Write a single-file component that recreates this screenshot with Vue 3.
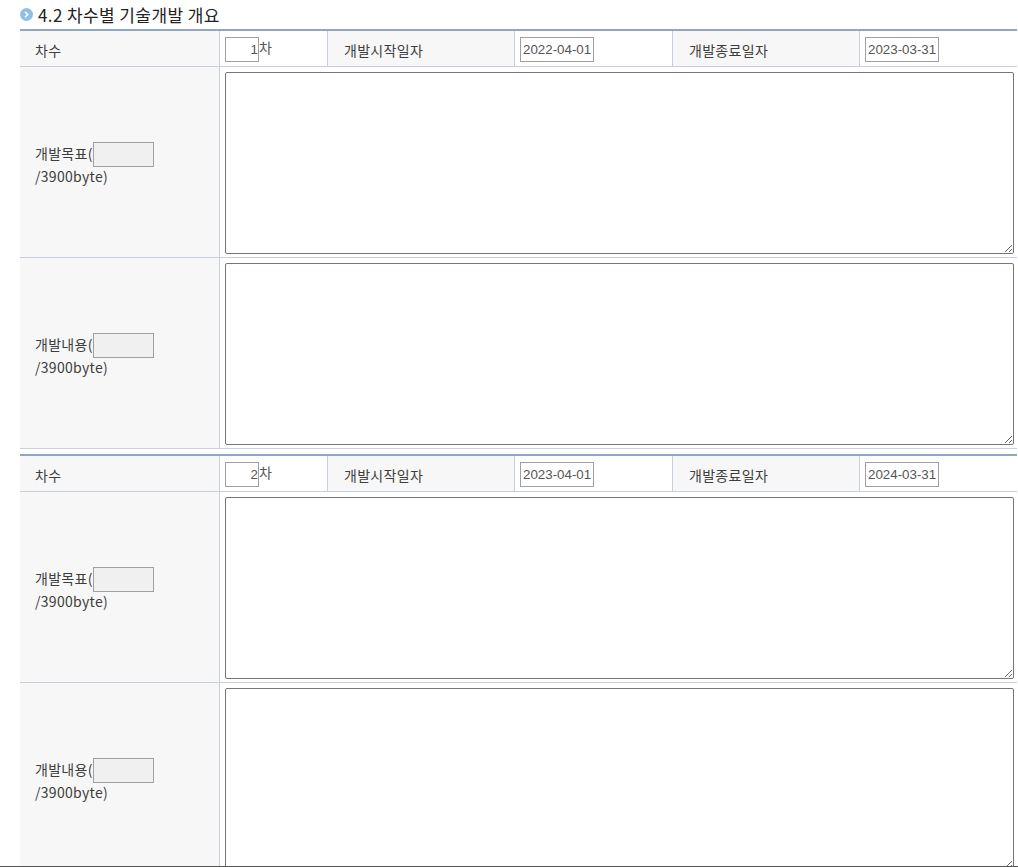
<script setup>
const blocks = [
  { no: 1, start: '2022-04-01', end: '2023-03-31' },
  { no: 2, start: '2023-04-01', end: '2024-03-31' },
]
</script>

<template>
  <div class="page">
    <h4 class="title">
      <svg class="bullet" width="13" height="13" viewBox="0 0 13 13">
        <circle cx="6.5" cy="6.5" r="6.5" fill="#8fbfe6" />
        <path d="M5 3.8 7.7 6.5 5 9.2" fill="none" stroke="#fff" stroke-width="1.6" />
      </svg>
      <span>4.2 차수별 기술개발 개요</span>
    </h4>
    <table v-for="b in blocks" :key="b.no" class="grid">
      <colgroup>
        <col class="c1" /><col class="c2" /><col class="c3" /><col class="c4" /><col class="c5" /><col class="c6" />
      </colgroup>
      <tbody>
        <tr class="head">
          <th>차수</th>
          <td><input class="no" :value="b.no" readonly /><span class="unit">차</span></td>
          <th>개발시작일자</th>
          <td><input class="date" :value="b.start" readonly /></td>
          <th>개발종료일자</th>
          <td><input class="date" :value="b.end" readonly /></td>
        </tr>
        <tr class="body">
          <th>개발목표(<input class="count" readonly /><br />/3900byte)</th>
          <td colspan="5"><textarea></textarea></td>
        </tr>
        <tr class="body">
          <th>개발내용(<input class="count" readonly /><br />/3900byte)</th>
          <td colspan="5"><textarea></textarea></td>
        </tr>
      </tbody>
    </table>
    <div class="fold"></div>
  </div>
</template>

<style scoped>
.page {
  height: 867px;
  overflow: hidden;
  position: relative;
  box-sizing: border-box;
  padding: 0 1px 0 20px;
  background: #fff;
  font-family: "Noto Sans CJK KR", "Noto Sans", sans-serif;
  color: #444;
}
.title {
  margin: 0;
  height: 29px;
  display: flex;
  align-items: center;
  gap: 5px;
  font-size: 17px;
  letter-spacing: 0.4px;
  font-weight: 400;
  color: #222;
  box-sizing: border-box;
  padding-bottom: 1px;
}
.bullet {
  flex: none;
}
.grid {
  width: 997px;
  table-layout: fixed;
  border-collapse: separate;
  border-spacing: 0;
  border-top: 2px solid #8ea8c3;
  margin-bottom: 5px;
}
.c1 { width: 200px; }
.c2 { width: 108px; }
.c3 { width: 187px; }
.c4 { width: 158px; }
.c5 { width: 187px; }
th, td {
  box-sizing: border-box;
  padding: 0 0 0 5px;
  border-bottom: 1px solid #c5d0dc;
  border-right: 1px solid #c5d0dc;
  font-size: 14px;
  font-weight: 400;
  letter-spacing: 0.3px;
  line-height: 23px;
  text-align: left;
  vertical-align: middle;
}
th {
  padding-left: 15px;
  background: #f7f7f7;
  color: #3d3d3d;
}
.head th {
  padding-top: 3px;
  padding-left: 16px;
}
.head th:first-child {
  padding-left: 15px;
}
.head td {
  padding-top: 2px;
}
.body th {
  padding-top: 5px;
  line-height: 22px;
}
td:last-child {
  border-right: 0;
}
.head th, .head td {
  height: 36px;
}
.body th, .body td {
  height: 191px;
}
.body td {
  vertical-align: top;
  padding-top: 5px;
}
input {
  box-sizing: border-box;
  height: 25px;
  border: 1px solid #a0a0a0;
  background: #fff;
  padding: 1px 2px;
  margin: 0;
  font-family: "Liberation Sans", Arial, sans-serif;
  font-size: 13.33px;
  letter-spacing: 0;
  color: #555;
  vertical-align: middle;
  outline: none;
}
.no {
  width: 34px;
  text-align: right;
  padding-right: 0;
}
.unit {
  color: #555;
  position: relative;
  top: -1px;
}
.date {
  width: 74px;
}
.count {
  width: 61px;
  margin: -2px 0;
  background: #f0f0f0;
}
textarea {
  display: block;
  box-sizing: border-box;
  width: 789px;
  height: 182px;
  margin: 0;
  padding: 2px;
  border: 1px solid #767676;
  border-radius: 2px;
  background: #fff;
  outline: none;
}
.fold {
  position: absolute;
  left: 0;
  right: 0;
  bottom: 0;
  height: 1px;
  background: #555;
}
</style>
